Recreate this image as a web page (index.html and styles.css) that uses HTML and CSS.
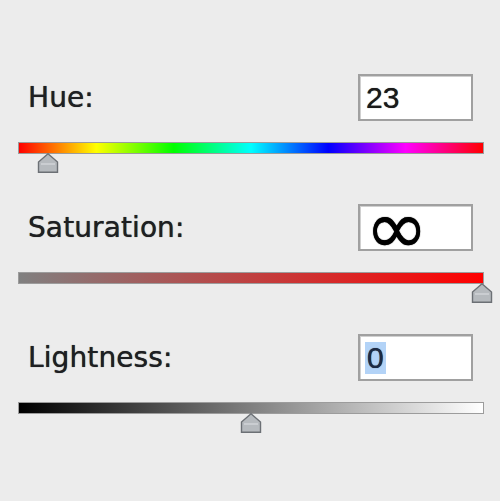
FILE: index.html
```html
<!DOCTYPE html>
<html lang="en">

<head>
    <meta charset="UTF-8">
    <meta name="viewport" content="width=device-width, initial-scale=1.0">
    <title>Hue/Saturation</title>
    <link rel="stylesheet" href="styles.css">
</head>

<body>
    <div class="panel">
        <!-- Hue -->
        <div class="control">
            <div class="row">
                <span class="label">Hue:</span>
                <div class="field"><span class="value">23</span></div>
            </div>
            <div class="bar hue"></div>
            <div class="track">
                <svg class="thumb" style="left: 6.4%;" width="22" height="20" viewBox="0 0 22 20">
                    <path d="M11 0.8 L20.5 9 L20.5 19.3 L1.5 19.3 L1.5 9 Z" fill="#b6babe" stroke="#6c7075" stroke-width="1.4" />
                    <path d="M4 11 L18 11" stroke="#d8dbde" stroke-width="1.2" />
                </svg>
            </div>
        </div>

        <!-- Saturation -->
        <div class="control">
            <div class="row">
                <span class="label">Saturation:</span>
                <div class="field"><span class="value infinity">∞</span></div>
            </div>
            <div class="bar saturation"></div>
            <div class="track">
                <svg class="thumb" style="left: 99.6%;" width="22" height="20" viewBox="0 0 22 20">
                    <path d="M11 0.8 L20.5 9 L20.5 19.3 L1.5 19.3 L1.5 9 Z" fill="#b6babe" stroke="#6c7075" stroke-width="1.4" />
                    <path d="M4 11 L18 11" stroke="#d8dbde" stroke-width="1.2" />
                </svg>
            </div>
        </div>

        <!-- Lightness -->
        <div class="control">
            <div class="row">
                <span class="label">Lightness:</span>
                <div class="field"><span class="value selected">0</span></div>
            </div>
            <div class="bar lightness"></div>
            <div class="track">
                <svg class="thumb" style="left: 50%;" width="22" height="20" viewBox="0 0 22 20">
                    <path d="M11 0.8 L20.5 9 L20.5 19.3 L1.5 19.3 L1.5 9 Z" fill="#b6babe" stroke="#6c7075" stroke-width="1.4" />
                    <path d="M4 11 L18 11" stroke="#d8dbde" stroke-width="1.2" />
                </svg>
            </div>
        </div>
    </div>
</body>

</html>
```

FILE: styles.css
```css
body {
    margin: 0;
    padding: 0;
    background-color: #ececec;
    font-family: 'DejaVu Sans', sans-serif;
    color: #1e1f22;
}

.panel {
    padding: 74px 16px 0 18px;
}

.control {
    margin-bottom: 31px;
}

/* Label and numeric field */
.row {
    display: flex;
    justify-content: space-between;
    align-items: center;
    padding: 0 11px 0 10px;
}

.label {
    font-size: 28px;
    letter-spacing: 0.1px;
    text-shadow: 0 0 0.7px #1e1f22;
}

.field {
    box-sizing: border-box;
    width: 115px;
    height: 47px;
    background-color: white;
    border: 2px solid #a0a0a0;
    box-shadow: inset 1px 1px 0 #d0d0d0;
    display: flex;
    align-items: center;
    padding-left: 6px;
}

.value {
    font-family: 'Liberation Sans', sans-serif;
    font-size: 30px;
    color: #1a1a1a;
    text-shadow: 0 0 0.7px #1a1a1a;
}

.infinity {
    font-family: 'DejaVu Sans', sans-serif;
    font-size: 76px;
    line-height: 43px;
    color: black;
    padding-left: 0;
    margin-left: -1px;
    text-shadow: 0 0 1px black;
}

.selected {
    background-color: #b3d3f7;
    color: #1c2a45;
    line-height: 32px;
    padding: 0 2px;
    margin-left: -1px;
}

/* Colour bars */
.bar {
    box-sizing: border-box;
    height: 12px;
    margin-top: 21px;
    border: 1px solid #9c9c9c;
}

.hue {
    background: linear-gradient(to right, #ff0000, #ffff00, #00ff00, #00ffff, #0000ff, #ff00ff, #ff0000);
}

.saturation {
    background: linear-gradient(to right, #808080, #ff0000);
}

.lightness {
    background: linear-gradient(to right, #000000, #ffffff);
}

.track {
    position: relative;
    height: 19px;
}

.thumb {
    position: absolute;
    top: -1px;
    margin-left: -11px;
}
```
